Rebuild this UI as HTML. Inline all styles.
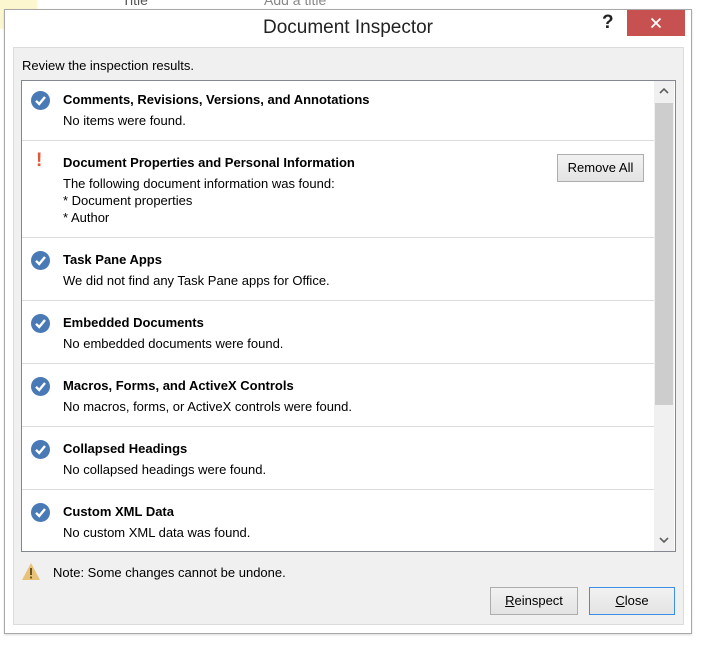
<!DOCTYPE html>
<html><head><style>
*{margin:0;padding:0;box-sizing:border-box}
body{width:704px;height:650px;background:#fff;position:relative;overflow:hidden;font-family:"Liberation Sans",sans-serif;font-size:13px;color:#000}
.a{position:absolute}
.t{position:absolute;white-space:nowrap}
.h{font-weight:bold}
.sep{position:absolute;left:22px;width:632px;height:1px;background:#dcdcdc}
.btn{position:absolute;background:linear-gradient(#f2f2f2,#e3e3e3);border:1px solid #adadad;text-align:center;font-size:13px}
</style></head><body>
<div class="a" style="left:0;top:0;width:37px;height:29px;background:#fdf7d0"></div>
<div class="t" style="left:122px;top:-8px;color:#555;font-size:14px">Title</div>
<div class="t" style="left:264px;top:-8px;color:#888;font-size:14px">Add a title</div>

<div class="a" style="left:4px;top:9px;width:688px;height:625px;border:1px solid #a8a8a8;background:#fff;box-shadow:0 1px 2px rgba(0,0,0,.15)"></div>
<div class="t" style="left:0;width:696px;text-align:center;top:17px;font-size:19px;color:#222">Document Inspector</div>
<div class="t" style="left:602px;top:12px;font-size:19px;font-weight:bold;color:#222">?</div>
<div class="a" style="left:627px;top:10px;width:58px;height:26px;background:#c75050"></div>
<svg class="a" style="left:650px;top:17px" width="12" height="12"><path d="M1.5 1.5L10.5 10.5M10.5 1.5L1.5 10.5" stroke="#fff" stroke-width="1.8"/></svg>

<div class="a" style="left:13px;top:47px;width:671px;height:578px;background:#f0f0f0;border:1px solid #dcdcdc"></div>
<div class="t" style="left:22px;top:58px">Review the inspection results.</div>

<div class="a" style="left:21px;top:80px;width:655px;height:472px;background:#fff;border:1px solid #828790"></div>
<div class="a" style="left:654px;top:81px;width:20px;height:470px;background:#f0f0f0"></div>
<div class="a" style="left:655px;top:103px;width:18px;height:302px;background:#cdcdcd"></div>
<svg class="a" style="left:658px;top:86px" width="12" height="10"><path d="M2 7L6 3L10 7" stroke="#606060" stroke-width="1.6" fill="none"/></svg>
<svg class="a" style="left:658px;top:535px" width="12" height="10"><path d="M2 3L6 7L10 3" stroke="#606060" stroke-width="1.6" fill="none"/></svg>

<svg width="0" height="0"><defs><symbol id="c" viewBox="0 0 19 19"><circle cx="9.5" cy="9.5" r="9.5" fill="#4a7ab5"/><path d="M5 9.8L8.2 13L14 6" stroke="#fff" stroke-width="2.4" fill="none"/></symbol></defs></svg>

<svg class="a" style="left:31px;top:91px" width="19" height="19"><use href="#c"/></svg>
<div class="t h" style="left:63px;top:92px">Comments, Revisions, Versions, and Annotations</div>
<div class="t" style="left:63px;top:113px">No items were found.</div>
<div class="sep" style="top:140px"></div>

<div class="t" style="left:36px;top:150px;color:#e05a3a;font-size:19px;font-weight:bold">!</div>
<div class="t h" style="left:63px;top:155px">Document Properties and Personal Information</div>
<div class="t" style="left:63px;top:176px">The following document information was found:</div>
<div class="t" style="left:63px;top:193px">* Document properties</div>
<div class="t" style="left:63px;top:210px">* Author</div>
<div class="btn" style="left:557px;top:154px;width:87px;height:28px;line-height:26px">Remove All</div>
<div class="sep" style="top:237px"></div>

<svg class="a" style="left:31px;top:251px" width="19" height="19"><use href="#c"/></svg>
<div class="t h" style="left:63px;top:252px">Task Pane Apps</div>
<div class="t" style="left:63px;top:273px">We did not find any Task Pane apps for Office.</div>
<div class="sep" style="top:300px"></div>

<svg class="a" style="left:31px;top:314px" width="19" height="19"><use href="#c"/></svg>
<div class="t h" style="left:63px;top:315px">Embedded Documents</div>
<div class="t" style="left:63px;top:336px">No embedded documents were found.</div>
<div class="sep" style="top:363px"></div>

<svg class="a" style="left:31px;top:377px" width="19" height="19"><use href="#c"/></svg>
<div class="t h" style="left:63px;top:378px">Macros, Forms, and ActiveX Controls</div>
<div class="t" style="left:63px;top:399px">No macros, forms, or ActiveX controls were found.</div>
<div class="sep" style="top:426px"></div>

<svg class="a" style="left:31px;top:440px" width="19" height="19"><use href="#c"/></svg>
<div class="t h" style="left:63px;top:441px">Collapsed Headings</div>
<div class="t" style="left:63px;top:462px">No collapsed headings were found.</div>
<div class="sep" style="top:489px"></div>

<svg class="a" style="left:31px;top:503px" width="19" height="19"><use href="#c"/></svg>
<div class="t h" style="left:63px;top:504px">Custom XML Data</div>
<div class="t" style="left:63px;top:525px">No custom XML data was found.</div>

<svg class="a" style="left:21px;top:562px" width="20" height="19"><path d="M10 1L19 18H1Z" fill="#e9c27a"/><path d="M10 6V13" stroke="#6b5220" stroke-width="2"/><circle cx="10" cy="15.5" r="1.1" fill="#6b5220"/></svg>
<div class="t" style="left:53px;top:565px">Note: Some changes cannot be undone.</div>

<div class="btn" style="left:490px;top:587px;width:88px;height:28px;line-height:26px"><u>R</u>einspect</div>
<div class="btn" style="left:589px;top:587px;width:86px;height:28px;line-height:26px;border-color:#3c8fe6"><u>C</u>lose</div>
</body></html>
